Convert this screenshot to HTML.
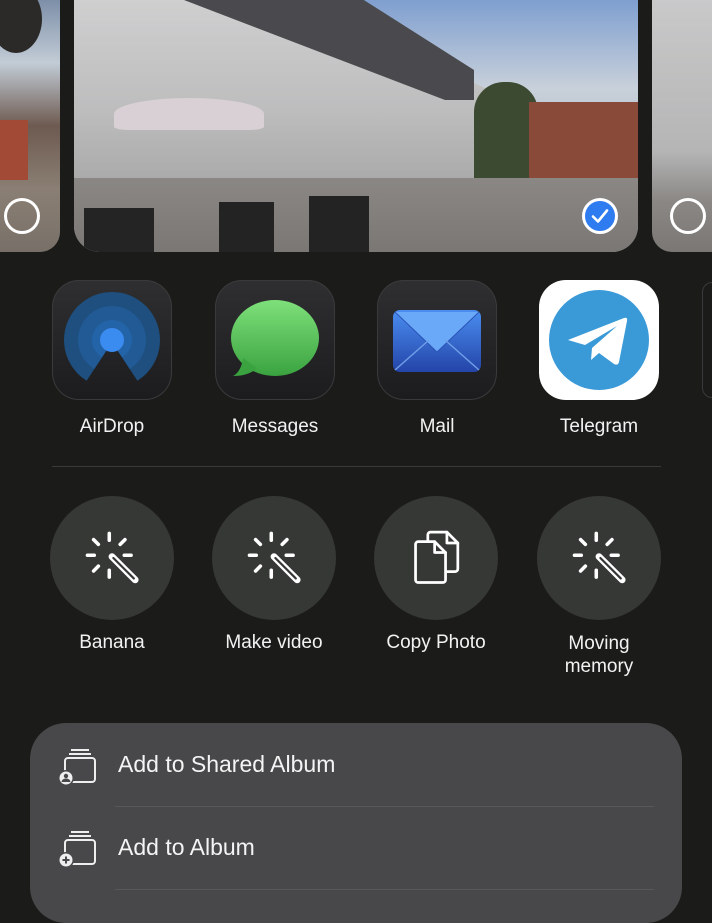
<!DOCTYPE html>
<html><head><meta charset="utf-8"><style>
*{margin:0;padding:0;box-sizing:border-box}
body{width:712px;height:896px;background:#1b1b19;overflow:hidden;position:relative;font-family:"Liberation Sans",sans-serif;color:#fff}
.ph{position:absolute;top:0;height:252px;overflow:hidden}
.sel{position:absolute;width:36px;height:36px;border-radius:50%;border:3px solid #fff;top:198px}
.app{position:absolute;top:280px;width:120px;height:120px;border-radius:27px;background:linear-gradient(180deg,#2f2f31,#1c1c1e);box-shadow:inset 0 0 0 1px #3a3a3c}
.lbl{position:absolute;width:160px;text-align:center;font-size:19px;color:#f2f2f2}
.act{position:absolute;top:496px;width:124px;height:124px;border-radius:50%;background:#363835}
.act svg{position:absolute;left:32px;top:32px}
.panel{position:absolute;left:30px;top:723px;width:652px;height:200px;background:#48484a;border-radius:36px}
.row{position:absolute;left:88px;font-size:23px;color:#f4f4f4}
.sep{position:absolute;left:85px;right:28px;height:1px;background:#58585a}
</style></head><body>
<div class="ph" style="left:0;width:60px;border-radius:0 0 20px 0;background:linear-gradient(180deg,#7d8fa8 0%,#c2ccd6 25%,#6e5a50 50%,#8a7f74 75%,#787068 100%)">
 <div style="position:absolute;left:-10px;top:-15px;width:52px;height:68px;border-radius:50%;background:#2c2a28"></div>
 <div style="position:absolute;left:0;top:120px;width:28px;height:60px;background:#a34a36"></div>
</div>
<div class="sel" style="left:4px;"></div>
<div class="ph" style="left:74px;width:564px;border-radius:0 0 26px 26px;background:linear-gradient(180deg,#7f9fd0 0%,#c8d0da 35%,#b0bac6 70%)">
 <div style="position:absolute;left:0;top:0;width:420px;height:185px;background:linear-gradient(180deg,#cfcfd0,#bdbdbe 60%,#a9a9a9);clip-path:polygon(0 0,55% 0,100% 50%,100% 100%,0 100%)"></div>
 <div style="position:absolute;left:110px;top:0;width:290px;height:100px;background:#4a4a4e;clip-path:polygon(0 0,62% 0,100% 70%,100% 100%,90% 100%)"></div>
 <div style="position:absolute;left:400px;top:82px;width:64px;height:100px;background:#3d4a32;border-radius:30px 30px 0 0"></div>
 <div style="position:absolute;left:455px;top:102px;width:110px;height:80px;background:#8a4a3a"></div>
 <div style="position:absolute;left:0;top:178px;width:564px;height:74px;background:linear-gradient(180deg,#8a8784,#7a7774)"></div>
 <div style="position:absolute;left:40px;top:98px;width:150px;height:32px;background:#d8d0d4;border-radius:50% 50% 10% 10%"></div>
 <div style="position:absolute;left:10px;top:208px;width:70px;height:44px;background:#242424"></div>
 <div style="position:absolute;left:145px;top:202px;width:55px;height:50px;background:#232323"></div>
 <div style="position:absolute;left:235px;top:196px;width:60px;height:56px;background:#232323"></div>
</div>
<div class="sel" style="left:582px;background:#2f7bf0;border-color:#fff">
 <svg width="30" height="30" viewBox="0 0 30 30" style="position:absolute;left:0;top:0"><path d="M8 15.5l5 5 9-11" stroke="#fff" stroke-width="2.6" fill="none" stroke-linecap="round" stroke-linejoin="round"/></svg>
</div>
<div class="ph" style="left:652px;width:60px;border-radius:0 0 0 20px;background:linear-gradient(180deg,#c9c9ca 0%,#b5b5b6 60%,#8a8784 80%,#7a7774 100%)"></div>
<div class="sel" style="left:670px;"></div>

<div class="app" style="left:52px">
 <svg width="120" height="120" viewBox="0 0 120 120"><defs><clipPath id="c"><path d="M0 0H120V120H0Z M60 62 L22 120 H98Z" clip-rule="evenodd"/></clipPath></defs>
 <g clip-path="url(#c)"><circle cx="60" cy="60" r="48" fill="#1e4f7e"/><circle cx="60" cy="60" r="34" fill="#215a94"/><circle cx="60" cy="60" r="20" fill="#2364a8"/></g>
 <circle cx="60" cy="60" r="12" fill="#3b8cf0"/></svg>
</div>
<div class="app" style="left:215px">
 <svg width="120" height="120" viewBox="0 0 120 120"><defs><linearGradient id="g" x1="0" y1="0" x2="0" y2="1"><stop offset="0" stop-color="#7ee07a"/><stop offset="1" stop-color="#3aa340"/></linearGradient></defs>
 <ellipse cx="60" cy="58" rx="44" ry="38" fill="url(#g)"/><path d="M28 78 Q26 92 18 96 Q34 96 42 88Z" fill="#3aa340"/></svg>
</div>
<div class="app" style="left:377px">
 <svg width="120" height="120" viewBox="0 0 120 120"><defs><linearGradient id="m" x1="0" y1="0" x2="0" y2="1"><stop offset="0" stop-color="#4a8ef0"/><stop offset="1" stop-color="#2444a8"/></linearGradient></defs>
 <rect x="16" y="30" width="88" height="62" rx="7" fill="url(#m)"/><path d="M18 32 L60 72 L102 32" fill="#6aa8f8" stroke="#2a55b8" stroke-width="1"/><path d="M18 90 L52 60 M102 90 L68 60" stroke="#6f9ee8" stroke-width="1.5"/></svg>
</div>
<div class="app" style="left:539px;background:#fff;box-shadow:none">
 <svg width="120" height="120" viewBox="0 0 120 120"><circle cx="60" cy="60" r="50" fill="#3a9ad8"/><path d="M29 60 L85 38 Q89 37 88 41 L80 82 Q79 86 75 84 L60 73 L52 80 L53 68 L78 46 L46 65Z" fill="#fff"/></svg>
</div>
<div style="position:absolute;left:702px;top:282px;width:20px;height:116px;border-radius:20px;border:1px solid #3a3a3c"></div>
<div class="lbl" style="left:32px;top:416px">AirDrop</div>
<div class="lbl" style="left:195px;top:416px">Messages</div>
<div class="lbl" style="left:357px;top:416px">Mail</div>
<div class="lbl" style="left:519px;top:416px">Telegram</div>

<div style="position:absolute;left:52px;top:466px;width:609px;height:1px;background:#3a3a3a"></div>

<svg width="0" height="0" style="position:absolute"><defs><g id="w" stroke="#fff" stroke-width="2.6" stroke-linecap="round" fill="none">
<path d="M26 10v5M26 37v5M10 26h5M37 26h5M14.5 14.5l3.5 3.5M14.5 37.5l3.5-3.5M37.5 14.5l-3.5 3.5"/>
<path d="M28 27 L45 44" stroke-width="5"/><path d="M29 28 L44 43" stroke="#363835" stroke-width="1.6"/></g></defs></svg>
<div class="act" style="left:50px"><svg width="60" height="60" viewBox="6 6 44 44"><use href="#w"/></svg></div>
<div class="act" style="left:212px"><svg width="60" height="60" viewBox="6 6 44 44"><use href="#w"/></svg></div>
<div class="act" style="left:374px"><svg width="60" height="60" viewBox="6 9 44 44"><g stroke="#fff" stroke-width="2" fill="none" stroke-linejoin="round" stroke-linecap="round">
<path d="M22 19V14a2 2 0 0 1 2-2H36L44 20V39a2 2 0 0 1-2 2H36"/><path d="M36 12V20H44"/>
<path d="M13 21a2 2 0 0 1 2-2H27L35 27V47a2 2 0 0 1-2 2H15a2 2 0 0 1-2-2Z"/><path d="M27 19V27H35"/></g></svg></div>
<div class="act" style="left:537px"><svg width="60" height="60" viewBox="6 6 44 44"><use href="#w"/></svg></div>
<div class="lbl" style="left:32px;top:632px">Banana</div>
<div class="lbl" style="left:194px;top:632px">Make video</div>
<div class="lbl" style="left:356px;top:632px">Copy Photo</div>
<div class="lbl" style="left:519px;top:632px;line-height:23px">Moving<br>memory</div>

<div class="panel">
 <svg style="position:absolute;left:26px;top:24px" width="44" height="40" viewBox="0 0 44 40"><g stroke="#eee" stroke-width="2" fill="none"><path d="M15 3h18M13 7h22"/><rect x="9" y="11" width="30" height="24" rx="3"/></g><circle cx="10" cy="31" r="8" fill="#48484a"/><circle cx="10" cy="31" r="6.5" fill="#eee"/><circle cx="10" cy="29" r="2.2" fill="#48484a"/><path d="M5.5 35a4.5 3.5 0 0 1 9 0" fill="#48484a"/></svg>
 <div class="row" style="top:28px">Add to Shared Album</div>
 <div class="sep" style="top:83px"></div>
 <svg style="position:absolute;left:26px;top:106px" width="44" height="40" viewBox="0 0 44 40"><g stroke="#eee" stroke-width="2" fill="none"><path d="M15 3h18M13 7h22"/><rect x="9" y="11" width="30" height="24" rx="3"/></g><circle cx="10" cy="31" r="8" fill="#48484a"/><circle cx="10" cy="31" r="6.5" fill="#eee"/><path d="M10 27.5v7M6.5 31h7" stroke="#48484a" stroke-width="2"/></svg>
 <div class="row" style="top:111px">Add to Album</div>
 <div class="sep" style="top:166px"></div>
</div>
</body></html>
